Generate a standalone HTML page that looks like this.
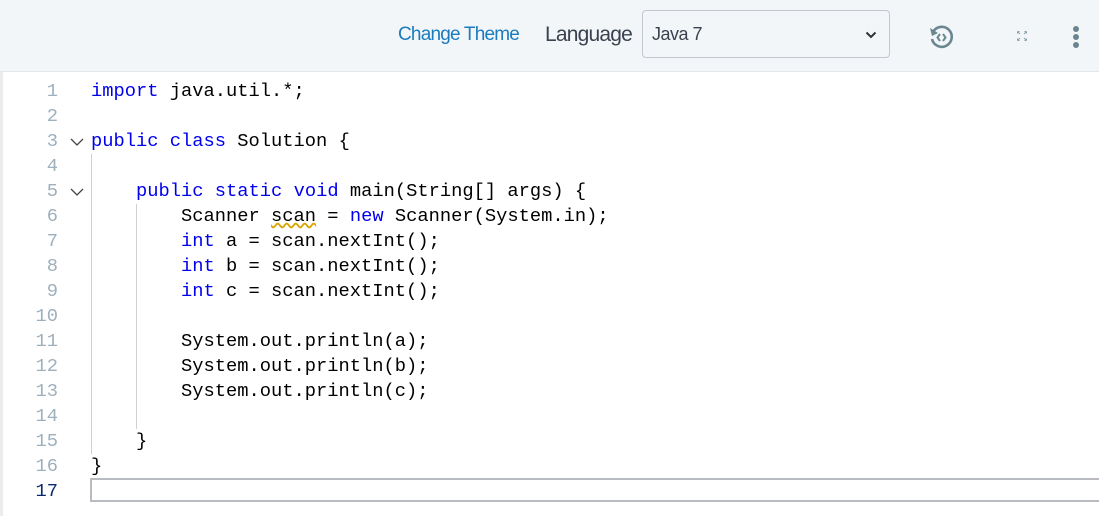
<html><head><style>
body{margin:0;width:1099px;height:516px;overflow:hidden;background:#fff;font-family:"Liberation Sans",sans-serif;position:relative}
.hdr{position:absolute;left:0;top:0;width:1099px;height:71px;background:#f3f6f8;border-bottom:1px solid #e3e7ea}
.ct{position:absolute;left:398px;top:24px;font-size:19px;color:#1a7bbd;letter-spacing:-0.8px}
.lg{position:absolute;left:545px;top:23px;font-size:21px;color:#39424e;letter-spacing:-0.8px}
.sel{position:absolute;left:642px;top:10px;width:248px;height:48px;border:1px solid #c2c7d0;border-radius:4px;background:#f3f6f8;box-sizing:border-box}
.sel span{position:absolute;left:9px;top:13px;font-size:18px;color:#39424e;letter-spacing:-0.5px}
.strip{position:absolute;left:0;top:72px;width:3px;height:444px;background:#ececec}
.ln{position:absolute;left:0;width:58px;text-align:right;font:18.75px/25px "Liberation Mono",monospace;color:#9fb0bd}
.code{position:absolute;left:91px;font:18.75px/25px "Liberation Mono",monospace;color:#000;white-space:pre}
.k{color:#0000ee}
.fold{position:absolute;left:70px;width:14px;height:14px}
.guide{position:absolute;width:1px;background:#d0d0d0}
</style></head><body>
<div class="hdr">
<div class="ct">Change Theme</div>
<div class="lg">Language</div>
<div class="sel"><span>Java 7</span>
<svg style="position:absolute;left:222px;top:20px" width="12" height="8" viewBox="0 0 12 8"><path d="M1.5 1.5L6 6L10.5 1.5" fill="none" stroke="#333" stroke-width="2"/></svg></div>
<svg style="position:absolute;left:928px;top:24px" width="26" height="26" viewBox="0 0 26 26"><path d="M5 8A10 10 0 1 1 4 15" fill="none" stroke="#6a8790" stroke-width="2.6"/><path d="M2 4L4 12L10 9Z" fill="#6a8790"/><path d="M12 10L9.5 13.5L12 17M15 10L17.5 13.5L15 17" fill="none" stroke="#6a8790" stroke-width="2"/></svg>
<svg style="position:absolute;left:1017px;top:31px" width="10" height="10" viewBox="0 0 10 10"><path d="M0.5 0.5L3 3M0.5 0.5h2M0.5 0.5v2M9.5 0.5L7 3M9.5 0.5h-2M9.5 0.5v2M0.5 9.5L3 7M0.5 9.5h2M0.5 9.5v-2M9.5 9.5L7 7M9.5 9.5h-2M9.5 9.5v-2" stroke="#8aa2a8" stroke-width="1" fill="none"/></svg>
<div style="position:absolute;left:1073px;top:26px;width:6px;height:6px;border-radius:3px;background:#6a8790"></div>
<div style="position:absolute;left:1073px;top:34px;width:6px;height:6px;border-radius:3px;background:#6a8790"></div>
<div style="position:absolute;left:1073px;top:42px;width:6px;height:6px;border-radius:3px;background:#6a8790"></div>
</div>
<div class="strip"></div>
<div class="ln" style="top:79px">1<br>2<br>3<br>4<br>5<br>6<br>7<br>8<br>9<br>10<br>11<br>12<br>13<br>14<br>15<br>16<br><span style="color:#0b2a6e">17</span></div>
<svg class="fold" style="top:135px" viewBox="0 0 14 14"><path d="M1 4L7 10L13 4" fill="none" stroke="#444" stroke-width="1.3"/></svg>
<svg class="fold" style="top:185px" viewBox="0 0 14 14"><path d="M1 4L7 10L13 4" fill="none" stroke="#444" stroke-width="1.3"/></svg>
<div class="guide" style="left:91px;top:154px;height:300px"></div>
<div class="guide" style="left:136px;top:204px;height:225px"></div>
<div class="code" style="top:79px"><span class="k">import</span> java.util.*;

<span class="k">public</span> <span class="k">class</span> Solution {

    <span class="k">public</span> <span class="k">static</span> <span class="k">void</span> main(String[] args) {
        Scanner <span style="text-decoration:underline wavy #d9a400">scan</span> = <span class="k">new</span> Scanner(System.in);
        <span class="k">int</span> a = scan.nextInt();
        <span class="k">int</span> b = scan.nextInt();
        <span class="k">int</span> c = scan.nextInt();

        System.out.println(a);
        System.out.println(b);
        System.out.println(c);

    }
}</div>
<div style="position:absolute;left:90px;top:478px;width:1015px;height:24px;border:2px solid #b8bcc0;box-sizing:border-box"></div>
</body></html>
